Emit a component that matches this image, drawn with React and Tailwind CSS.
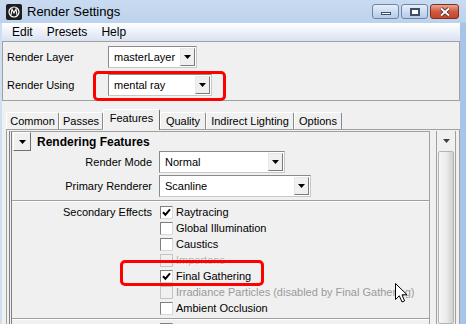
import React from "react";

const Tri = ({ color = "#000" }) => (
  <svg width="7" height="4" viewBox="0 0 7 4"><path d="M0 0h7L3.5 4z" fill={color} /></svg>
);

function Dropdown({ className, text }) {
  return (
    <div className={`flex h-[22px] items-center bg-white border border-t-[#8a8a8a] border-l-[#8a8a8a] border-r-[#c8c8c8] border-b-[#c8c8c8] ${className}`}>
      <span className="flex-1 pl-[5px] text-[11px] leading-none">{text}</span>
      <div className="w-[15px] h-[18px] mr-[1px] flex items-center justify-center bg-[#f0f0f0] border border-t-[#e8e8e8] border-l-[#e8e8e8] border-r-[#7a7a7a] border-b-[#7a7a7a]">
        <Tri />
      </div>
    </div>
  );
}

function Check({ checked, disabled }) {
  return (
    <div
      className={
        disabled
          ? "w-[13px] h-[13px] border border-[#c4c4c4] bg-[#f0f0f0]"
          : "w-[13px] h-[13px] border border-t-[#7f7f7f] border-l-[#7f7f7f] border-r-[#d8d8d8] border-b-[#d8d8d8] bg-white flex items-center justify-center"
      }
    >
      {checked && (
        <svg width="9" height="9" viewBox="0 0 9 9">
          <path d="M1 4.2L3.4 6.8L8 1.4" stroke="#000" strokeWidth="2" fill="none" />
        </svg>
      )}
    </div>
  );
}

function Row({ label, checked, disabled, faint, text }) {
  const tc = faint
    ? "text-[#b4b4b4] [text-shadow:1px_1px_0_#ffffff]"
    : disabled
    ? "text-[#9a9a9a]"
    : "text-black";
  return (
    <div className="flex h-[16px] items-center">
      <div className="w-[140px] text-right leading-none">{label}</div>
      <div className="ml-[8px]"><Check checked={checked} disabled={disabled} /></div>
      <span className={`ml-[3px] leading-none whitespace-nowrap ${tc}`}>{text}</span>
    </div>
  );
}

function Tab({ w, label, active }) {
  return active ? (
    <div className={`${w} h-[21px] -mb-px relative z-10 bg-[#f0f0f0] border-l border-t border-white border-r border-r-[#6f6f6f] rounded-t-[2px] flex justify-center pt-[3px] leading-none`}>
      {label}
    </div>
  ) : (
    <div className={`${w} h-[17px] border-l border-t border-white border-r border-r-[#8a8a8a] rounded-t-[2px] flex justify-center items-center leading-none`}>
      {label}
    </div>
  );
}

export default function App() {
  return (
    <div className="relative w-[466px] h-[324px] overflow-hidden flex flex-col bg-[#bcd2ee] font-['Liberation_Sans',Arial,sans-serif] text-[11px] text-black">
      {/* Title bar */}
      <div className="h-[23px] shrink-0 flex items-center bg-gradient-to-b from-[#c9dbf1] to-[#bcd2ec]">
        <div className="ml-[6px] w-[16px] h-[16px]">
          <svg width="16" height="16" viewBox="0 0 16 16">
            <rect x="0" y="0" width="16" height="16" rx="2" fill="#1e1e1e" />
            <circle cx="8" cy="8" r="5" stroke="#fff" strokeWidth="1.2" fill="none" />
            <path d="M5 11L6 5L8 9L10 5L11 11" stroke="#fff" strokeWidth="1.1" fill="none" />
          </svg>
        </div>
        <span className="ml-[5px] text-[13px] leading-none">Render Settings</span>
        <div className="ml-auto mr-[7px] flex gap-[2px]">
          <div className="w-[27px] h-[15px] rounded-[3px] border border-[#6c86ab] bg-gradient-to-b from-[#e6eef9] to-[#b6cbe6] flex items-end justify-center pb-[3px]">
            <div className="w-[10px] h-[3px] bg-white border border-[#3c4e6b]" />
          </div>
          <div className="w-[27px] h-[15px] rounded-[3px] border border-[#6c86ab] bg-gradient-to-b from-[#e6eef9] to-[#b6cbe6] flex items-center justify-center">
            <div className="w-[10px] h-[8px] bg-white border-2 border-[#3c4e6b]" />
          </div>
          <div className="w-[29px] h-[15px] rounded-[3px] border border-[#7c2e1f] bg-gradient-to-b from-[#e9a694] via-[#d05a3e] to-[#c4452a] flex items-center justify-center">
            <svg width="12" height="10" viewBox="0 0 12 10">
              <path d="M2 1.5L10 8.5M10 1.5L2 8.5" stroke="#4a2018" strokeWidth="3.6" />
              <path d="M2 1.5L10 8.5M10 1.5L2 8.5" stroke="#fff" strokeWidth="2" />
            </svg>
          </div>
        </div>
      </div>

      <div className="flex-1 flex min-h-0">
        <div className="w-[2px] bg-[#cfdff2]" />
        <div className="w-[458px] flex flex-col bg-[#f0f0f0]">
          {/* Menu bar */}
          <div className="h-[18px] shrink-0 flex items-center gap-[14px] pl-[10px] text-[12px] leading-none bg-gradient-to-b from-white to-[#d9e2f2]">
            <span>Edit</span>
            <span>Presets</span>
            <span>Help</span>
          </div>

          {/* Top panel */}
          <div className="h-[60px] shrink-0 border border-[#a0a0a0] pt-[4px] flex flex-col gap-[6px]">
            <div className="flex items-center h-[22px]">
              <div className="w-[105px] pl-[4px] leading-none">Render Layer</div>
              <Dropdown className="w-[89px]" text="masterLayer" />
            </div>
            <div className="flex items-center h-[22px]">
              <div className="w-[105px] pl-[4px] leading-none">Render Using</div>
              <Dropdown className="w-[104px]" text="mental ray" />
            </div>
          </div>

          {/* Tabs */}
          <div className="h-[28px] shrink-0 flex items-end pl-[4px]">
            <Tab w="w-[53px]" label="Common" />
            <Tab w="w-[44px]" label="Passes" />
            <Tab w="w-[57px]" label="Features" active />
            <Tab w="w-[46px]" label="Quality" />
            <Tab w="w-[88px]" label="Indirect Lighting" />
            <Tab w="w-[48px]" label="Options" />
          </div>

          {/* Tab panel */}
          <div className="flex-1 min-h-0 ml-[4px] border-t border-l border-r border-[#a0a0a0] pl-[2px] pt-[1px] flex">
            <div className="w-[421px] border-l-[3px] border-double border-l-[#808080] border-t border-t-[#a0a0a0] border-r border-r-[#a0a0a0] flex flex-col">
              <div className="h-[20px] flex items-center pl-[1px]">
                <div className="w-[18px] h-[19px] flex items-center justify-center bg-[#f0f0f0] border border-t-white border-l-white border-r-[#6f6f6f] border-b-[#6f6f6f]">
                  <Tri />
                </div>
                <span className="ml-[6px] text-[12px] font-bold leading-none">Rendering Features</span>
              </div>
              <div className="flex items-center h-[22px]">
                <div className="w-[140px] text-right leading-none">Render Mode</div>
                <Dropdown className="ml-[7px] w-[126px]" text="Normal" />
              </div>
              <div className="flex items-center h-[22px] mt-[2px]">
                <div className="w-[140px] text-right leading-none">Primary Renderer</div>
                <Dropdown className="ml-[7px] w-[152px]" text="Scanline" />
              </div>
              <div className="mt-[3px] border-t border-[#a0a0a0] border-b border-b-white" />
              <div className="pt-[2px] flex flex-col">
                <Row label="Secondary Effects" checked text="Raytracing" />
                <Row text="Global Illumination" />
                <Row text="Caustics" />
                <Row disabled faint text="Importons" />
                <Row checked text="Final Gathering" />
                <Row disabled text="Irradiance Particles (disabled by Final Gathering)" />
                <Row text="Ambient Occlusion" />
              </div>
              <div className="mt-[2px] border-t border-[#a0a0a0] border-b border-b-white" />
              <div className="pt-[1px]">
                <Row text="" />
              </div>
            </div>
            <div className="ml-[6px] w-[19px] border-l border-[#a0a0a0] flex flex-col">
              <div className="h-[20px] flex items-center justify-center">
                <Tri color="#404040" />
              </div>
              <div className="flex-1 mx-[1px] rounded-[2px] border border-[#b4b4b4] bg-gradient-to-r from-[#f6f6f6] via-[#ececec] to-[#cfcfcf]" />
            </div>
            <div className="w-[3px] border-l border-[#a0a0a0]" />
          </div>
        </div>
        <div className="flex-1 bg-[#a8c4e8]" />
      </div>

      {/* Annotations */}
      <div className="absolute left-[93px] top-[71px] w-[133px] h-[30px] border-[3px] border-[#ff0000] rounded-[5px]" />
      <div className="absolute left-[120px] top-[260px] w-[144px] h-[26px] border-[3px] border-[#ff0000] rounded-[5px]" />

      {/* Cursor */}
      <svg className="absolute left-[395px] top-[283px]" width="14" height="21" viewBox="0 0 14 21">
        <path d="M0.5 0.5L0.5 16.5L4.3 12.8L7 19L9.6 17.9L7 11.8L12 11.8Z" fill="#fff" stroke="#000" strokeWidth="1" strokeLinejoin="round" />
      </svg>
    </div>
  );
}
